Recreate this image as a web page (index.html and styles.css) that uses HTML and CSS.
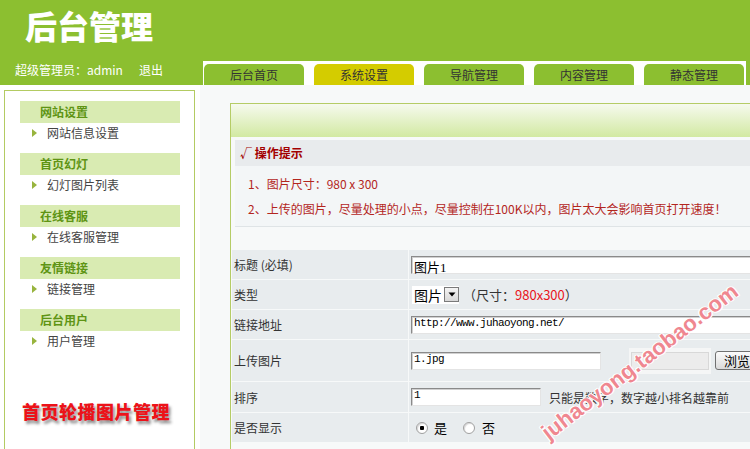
FILE: index.html
```html
<!DOCTYPE html>
<html lang="zh-CN">
<head>
<meta charset="utf-8">
<title>后台管理</title>
<link rel="stylesheet" href="styles.css">
</head>
<body>
<header class="top">
  <div class="logo">后台管理</div>
</header>
<div class="navbar">
  <div class="user">超级管理员：admin<a class="logout">退出</a></div>
  <nav class="tabs">
    <a class="tab">后台首页</a>
    <a class="tab active">系统设置</a>
    <a class="tab">导航管理</a>
    <a class="tab">内容管理</a>
    <a class="tab">静态管理</a>
  </nav>
</div>
<div class="layout">
  <aside class="sidebar">
    <div class="menu">
      <div class="group"><h3>网站设置</h3><ul><li>网站信息设置</li></ul></div>
      <div class="group"><h3>首页幻灯</h3><ul><li>幻灯图片列表</li></ul></div>
      <div class="group"><h3>在线客服</h3><ul><li>在线客服管理</li></ul></div>
      <div class="group"><h3>友情链接</h3><ul><li>链接管理</li></ul></div>
      <div class="group"><h3>后台用户</h3><ul><li>用户管理</li></ul></div>
      <p class="caption">首页轮播图片管理</p>
    </div>
  </aside>
  <main class="main">
    <div class="box">
      <div class="box-head"></div>
      <div class="tips">
        <div class="tips-title">√ 操作提示</div>
        <div class="tips-body">
          <p>1、图片尺寸：980 x 300</p>
          <p>2、上传的图片，尽量处理的小点，尽量控制在100K以内，图片太大会影响首页打开速度！</p>
        </div>
      </div>
      <div class="form">
        <div class="label r1">标题 (必填)</div>
        <div class="value r1"><span class="input wide">图片1</span></div>
        <div class="label r2">类型</div>
        <div class="value r2">
          <span class="select"><span class="sel-text">图片</span><span class="sel-btn"><svg width="8" height="5" viewBox="0 0 8 5"><path d="M0.5 0.5h7L4 4.5z" fill="#000"/></svg></span></span>
          <span class="hint">（尺寸：<em>980x300</em>）</span>
        </div>
        <div class="label r3">链接地址</div>
        <div class="value r3"><span class="input wide mono">http://www.juhaoyong.net/</span></div>
        <div class="label r4">上传图片</div>
        <div class="value r4">
          <span class="input file-name mono">1.jpg</span>
          <span class="file-field"><span class="file-inner"></span></span>
          <span class="browse">浏览</span>
        </div>
        <div class="label r5">排序</div>
        <div class="value r5"><span class="input sort mono">1</span><span class="note">只能是数字，数字越小排名越靠前</span></div>
        <div class="label r6">是否显示</div>
        <div class="value r6">
          <label class="radio"><input type="radio" name="show" checked><span>是</span></label>
          <label class="radio second"><input type="radio" name="show"><span>否</span></label>
        </div>
      </div>
    </div>
  </main>
</div>
<div class="watermark">juhaoyong.taobao.com</div>
</body>
</html>
```
FILE: styles.css
```css
html, body {
  margin: 0;
  padding: 0;
}
body {
  width: 750px;
  height: 449px;
  overflow: hidden;
  position: relative;
  font: 12px "Noto Sans CJK SC", sans-serif;
  color: #333;
  background: #fff;
}
p { margin: 0; }
ul { margin: 0; padding: 0; list-style: none; }
h3 { margin: 0; }

.top {
  height: 60px;
  background: #8cbf30;
  padding: 7px 0 0 25px;
  box-sizing: border-box;
}
.logo {
  font-size: 32px;
  line-height: 36px;
  font-weight: 900;
  color: #fff;
  letter-spacing: 0;
}

.navbar {
  height: 25px;
  background: #8cbf30;
  display: flex;
}
.user {
  width: 203px;
  box-sizing: border-box;
  padding-left: 15px;
  line-height: 20px;
  color: #fff;
  font-size: 12px;
}
.logout { margin-left: 16px; }
.tabs {
  flex: 1;
  margin: 1px 4px 0 0;
  padding: 3px 0 0 1px;
  background: #fff;
  display: flex;
  gap: 10px;
}
.tab {
  width: 100px;
  height: 21px;
  line-height: 21px;
  text-align: center;
  background: #8cbf30;
  border-radius: 5px 5px 0 0;
  color: #333;
  font-size: 12px;
}
.tab.active { background: #d4cc00; }

.layout {
  display: flex;
  height: 364px;
}
.sidebar {
  width: 200px;
  box-sizing: border-box;
  padding: 5px 5px 0 4px;
  background: #fff;
}
.menu {
  height: 100%;
  box-sizing: border-box;
  border: 1px solid #b3cb62;
  border-bottom: 0;
  padding-top: 10px;
}
.group h3 {
  margin-left: 15px;
  width: 160px;
  height: 22px;
  line-height: 22px;
  box-sizing: border-box;
  padding-left: 20px;
  background: #d9ebb2;
  color: #5e9414;
  font-size: 12px;
  font-weight: 700;
}
.group ul { margin-bottom: 10px; }
.group li {
  height: 20px;
  line-height: 20px;
  display: flex;
  align-items: center;
  color: #444;
}
.group li::before {
  content: "";
  width: 0;
  height: 0;
  border-top: 4px solid transparent;
  border-bottom: 4px solid transparent;
  border-left: 5px solid #98b43e;
  margin: 0 10px 0 27px;
}
.caption {
  margin-top: 48px;
  padding-left: 17px;
  font-size: 18px;
  line-height: 24px;
  font-weight: 900;
  color: #ec1219;
  letter-spacing: 0.5px;
  text-shadow: 2px 3px 3px rgba(0, 0, 0, 0.45);
}

.main {
  flex: 1;
  background: #f7f9f9;
  padding: 18px 0 0 30px;
}
.box {
  height: 100%;
  box-sizing: border-box;
  border: 1px solid #b5cc66;
  border-right: 0;
  border-bottom: 0;
  background: #f7f9f9;
}
.box-head {
  height: 33px;
  background: linear-gradient(#f6faee, #d2e9a2);
}
.tips {
  margin: 3px 0 0 4px;
}
.tips-title {
  height: 26px;
  line-height: 26px;
  padding-left: 5px;
  background: #e8ebed;
  color: #a30000;
  font-weight: 700;
}
.tips-body {
  background: #f3f6f7;
  padding: 5px 0 5px 13px;
  border-bottom: 1px solid #dfe4e6;
  color: #b3261e;
}
.tips-body p {
  line-height: 25px;
  white-space: nowrap;
}

.form {
  margin: 23px 0 0 1px;
  display: grid;
  grid-template-columns: 176px 1fr;
  grid-template-rows: 29px 29px 29px 41px 30px 29px;
  gap: 1px;
}
.label, .value {
  background: #e8ecee;
  display: flex;
  align-items: center;
  white-space: nowrap;
  overflow: hidden;
}
.label { padding-left: 2px; color: #333; }
.value { padding-left: 2px; }

.input {
  display: inline-block;
  flex: none;
  height: 18px;
  line-height: 18px;
  box-sizing: border-box;
  padding-left: 2px;
  background: #fff;
  border: 1px solid #e4e4e4;
  border-top-color: #8a8a8a;
  border-left-color: #8a8a8a;
  box-shadow: inset 1px 1px 0 #d0d0d0;
  color: #000;
  font: 13px "Liberation Serif", "Noto Sans CJK SC", serif;
}
.input.wide { width: 400px; }
.mono {
  font-family: "Liberation Mono", monospace;
  font-size: 11px;
  letter-spacing: -0.6px;
}
.input.file-name { width: 190px; margin-right: 28px; }
.input.sort { width: 130px; }

.select {
  display: inline-flex;
  align-items: center;
  height: 18px;
  background: #fff;
  margin-left: 1px;
}
.sel-text {
  font-size: 14px;
  color: #000;
  padding: 0 2px;
  line-height: 18px;
}
.sel-btn {
  width: 15px;
  height: 15px;
  box-sizing: border-box;
  border: 1px solid #7a7a7a;
  background: linear-gradient(#f4f4f4, #d8d8d8);
  display: flex;
  align-items: center;
  justify-content: center;
}
.hint {
  margin-left: 4px;
  font-size: 13px;
  color: #333;
}
.hint em {
  font-style: normal;
  color: #e8141a;
}

.file-field {
  flex: none;
  width: 82px;
  height: 26px;
  box-sizing: border-box;
  background: #f5f6f6;
  padding: 4px 2px;
  margin-right: 4px;
}
.file-inner {
  display: block;
  height: 100%;
  box-sizing: border-box;
  border: 1px solid #d8d8d8;
  background: #ececec;
}
.browse {
  display: inline-block;
  flex: none;
  height: 19px;
  line-height: 17px;
  box-sizing: border-box;
  padding: 0 8px;
  border: 1px solid #707070;
  border-radius: 3px;
  background: linear-gradient(#fbfbfb, #dadada);
  font-size: 13px;
  color: #000;
}
.note {
  margin-left: 8px;
  font-size: 12px;
  color: #333;
}

.radio {
  display: inline-flex;
  align-items: center;
  margin-left: 5px;
  font-size: 13px;
  color: #000;
}
.radio.second { margin-left: 16px; }
.radio input {
  appearance: none;
  -webkit-appearance: none;
  flex: none;
  width: 12px;
  height: 12px;
  margin: 0 6px 0 0;
  border: 1px solid #a0a0a0;
  border-radius: 50%;
  background: #fff;
  box-shadow: inset 1px 1px 1px #d8d8d8;
}
.radio input:checked {
  background: radial-gradient(circle, #000 0 2px, #fff 2.5px);
}
.radio.second input { margin-right: 7px; }

.watermark {
  position: absolute;
  left: 640px;
  top: 362px;
  transform: translate(-50%, -50%) rotate(-37.5deg);
  font: 700 22px "Liberation Sans", sans-serif;
  color: #ef8790;
  white-space: nowrap;
  text-shadow: 1px 0 #fff, -1px 0 #fff, 0 1px #fff, 0 -1px #fff, 1px 1px #fff, -1px -1px #fff;
  pointer-events: none;
}
```
